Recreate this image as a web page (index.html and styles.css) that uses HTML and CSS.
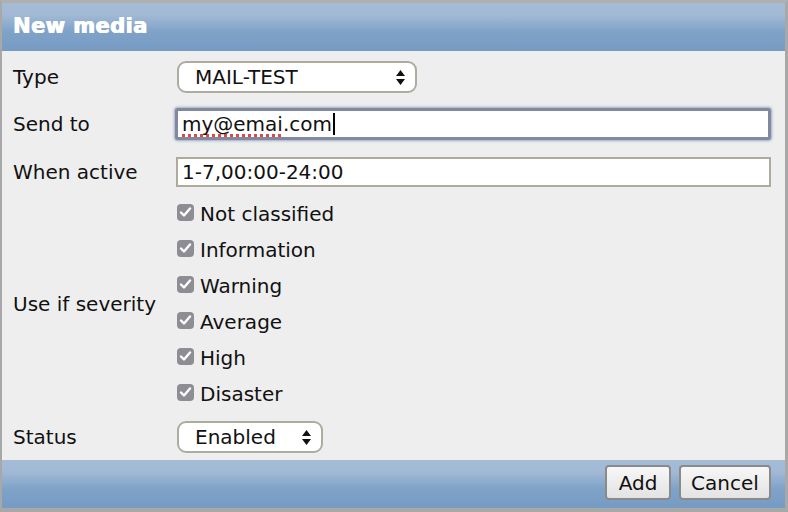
FILE: index.html
```html
<!DOCTYPE html>
<html>
<head>
<meta charset="utf-8">
<link rel="stylesheet" href="styles.css">
</head>
<body>
<div class="dialog">
  <div class="titlebar">New media</div>
  <div class="form">
    <div class="row row-type">
      <div class="label">Type</div>
      <div class="select select-type"><span>MAIL-TEST</span>
        <svg class="arrows" width="9" height="15" viewBox="0 0 9 15"><path d="M4.5 0 L9 6 L0 6 Z M0 9 L9 9 L4.5 15 Z" fill="#111"/></svg>
      </div>
    </div>
    <div class="row row-send">
      <div class="label">Send to</div>
      <div class="input focus"><span class="spell">my@emai</span>.com<span class="caret"></span></div>
    </div>
    <div class="row row-active">
      <div class="label">When active</div>
      <div class="input plain">1-7,00:00-24:00</div>
    </div>
    <div class="row row-sev">
      <div class="label">Use if severity</div>
      <div class="checks">
        <div class="check"><span class="box"><svg width="13" height="11" viewBox="0 0 13 11"><path d="M2 5.5 L5 8.5 L11 1.5" fill="none" stroke="#fff" stroke-width="2.4" stroke-linecap="round" stroke-linejoin="round"/></svg></span>Not classified</div>
        <div class="check"><span class="box"><svg width="13" height="11" viewBox="0 0 13 11"><path d="M2 5.5 L5 8.5 L11 1.5" fill="none" stroke="#fff" stroke-width="2.4" stroke-linecap="round" stroke-linejoin="round"/></svg></span>Information</div>
        <div class="check"><span class="box"><svg width="13" height="11" viewBox="0 0 13 11"><path d="M2 5.5 L5 8.5 L11 1.5" fill="none" stroke="#fff" stroke-width="2.4" stroke-linecap="round" stroke-linejoin="round"/></svg></span>Warning</div>
        <div class="check"><span class="box"><svg width="13" height="11" viewBox="0 0 13 11"><path d="M2 5.5 L5 8.5 L11 1.5" fill="none" stroke="#fff" stroke-width="2.4" stroke-linecap="round" stroke-linejoin="round"/></svg></span>Average</div>
        <div class="check"><span class="box"><svg width="13" height="11" viewBox="0 0 13 11"><path d="M2 5.5 L5 8.5 L11 1.5" fill="none" stroke="#fff" stroke-width="2.4" stroke-linecap="round" stroke-linejoin="round"/></svg></span>High</div>
        <div class="check"><span class="box"><svg width="13" height="11" viewBox="0 0 13 11"><path d="M2 5.5 L5 8.5 L11 1.5" fill="none" stroke="#fff" stroke-width="2.4" stroke-linecap="round" stroke-linejoin="round"/></svg></span>Disaster</div>
      </div>
    </div>
    <div class="row row-status">
      <div class="label">Status</div>
      <div class="select select-status"><span>Enabled</span>
        <svg class="arrows" width="9" height="15" viewBox="0 0 9 15"><path d="M4.5 0 L9 6 L0 6 Z M0 9 L9 9 L4.5 15 Z" fill="#111"/></svg>
      </div>
    </div>
  </div>
  <div class="footer">
    <div class="btn btn-add">Add</div>
    <div class="btn btn-cancel">Cancel</div>
  </div>
</div>
</body>
</html>
```
FILE: styles.css
```css
html, body {
  margin: 0;
  padding: 0;
  background: #ffffff;
}
body {
  font-family: "DejaVu Sans", Verdana, sans-serif;
  font-size: 20px;
  color: #111;
}
.dialog {
  width: 788px;
  height: 512px;
  box-sizing: border-box;
  border-top: 3px solid #b0b0b0;
  border-left: 2px solid #a8a8a8;
  border-right: 3px solid #a8a8a8;
  border-bottom: 4px solid #a8a8a8;
  background: #eeeeee;
  display: flex;
  flex-direction: column;
}
.titlebar {
  height: 48px;
  box-sizing: border-box;
  padding-left: 11px;
  padding-top: 11px;
  background: linear-gradient(to bottom, #a4bcd6 0%, #a1b9d4 25%, #7fa2c8 60%, #769bc3 100%);
  color: #ffffff;
  font-weight: bold;
  font-size: 21px;
  letter-spacing: 0.4px;
  line-height: 24px;
  text-shadow: 0.6px 0 0 #ffffff, -0.3px 0 0 #ffffff;
}
.form {
  flex: 1;
  padding: 10px 0 0 11px;
  display: flex;
  flex-direction: column;
}
.row {
  display: flex;
  align-items: center;
}
.label {
  width: 162px;
  flex: none;
  line-height: 24px;
}
.row-send { margin-top: 15px; }
.row-active { margin-top: 17px; }
.row-sev { margin-top: 9px; }
.row-status { margin-top: 9px; }
.select {
  height: 32px;
  box-sizing: border-box;
  border: 2px solid #aeab9f;
  border-radius: 9px;
  background: #ffffff;
  display: flex;
  align-items: center;
  justify-content: space-between;
  padding: 0 10px 0 16px;
  margin-left: 2px;
}
.select-type { width: 240px; }
.select-status { width: 146px; }
.arrows { flex: none; }
.input {
  box-sizing: border-box;
  background: #ffffff;
  display: flex;
  align-items: center;
  white-space: pre;
}
.focus {
  width: 596px;
  height: 32px;
  border: 3px solid #8089a0;
  border-radius: 3px;
  box-shadow: 0 0 0 1px #b9c1d0, 0 0 2px 2px #c9d0dc;
  padding-left: 4px;
  margin-left: 0;
}
.spell {
  text-decoration: underline dotted #e04848;
  text-decoration-thickness: 3px;
  text-underline-offset: 3px;
  text-decoration-skip-ink: none;
}
.caret {
  display: inline-block;
  width: 2px;
  height: 22px;
  background: #000;
  margin-left: 1px;
}
.plain {
  width: 595px;
  height: 30px;
  border: 2px solid #aeab9c;
  padding-left: 4px;
  margin-left: 1px;
}
.checks {
  display: flex;
  flex-direction: column;
  margin-left: 2px;
}
.check {
  height: 36px;
  display: flex;
  align-items: center;
  line-height: 24px;
}
.box {
  width: 17px;
  height: 17px;
  border-radius: 4px;
  background: #8d8d93;
  display: flex;
  align-items: center;
  justify-content: center;
  margin-right: 6px;
  margin-top: -4px;
}
.footer {
  height: 48px;
  flex: none;
  box-sizing: border-box;
  background: linear-gradient(to bottom, #a4bcd6 0%, #a1b9d4 25%, #7fa2c8 60%, #769bc3 100%);
  display: flex;
  justify-content: flex-end;
  align-items: flex-start;
  gap: 8px;
  padding: 5px 14px 0 0;
}
.btn {
  height: 35px;
  box-sizing: border-box;
  border: 2px solid #8a8a8a;
  border-radius: 4px;
  background: linear-gradient(to bottom, #f7f7f7, #e3e3e3);
  display: flex;
  align-items: center;
  justify-content: center;
  color: #111;
}
.btn-add { width: 66px; }
.btn-cancel { width: 92px; }
```
